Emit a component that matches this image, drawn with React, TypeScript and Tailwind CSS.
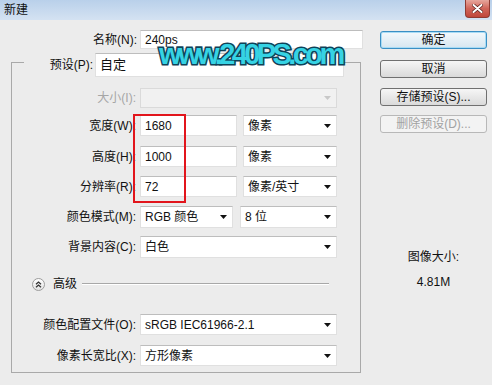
import { JSX, ReactNode } from "react";

const Arrow = ({ muted = false }: { muted?: boolean }) => (
  <svg width="7" height="4" viewBox="0 0 7 4" className="shrink-0">
    <path d="M0 0H7L3.5 4Z" fill={muted ? "#c8c8c8" : "#111"} />
  </svg>
);

function Box({
  value,
  className = "",
  select = false,
  disabled = false,
}: {
  value?: string;
  className?: string;
  select?: boolean;
  disabled?: boolean;
}) {
  return (
    <div
      className={`flex h-full items-center justify-between border pl-[4px] pr-[5px] ${
        disabled
          ? "border-[#dadada] bg-[#f1f1f1]"
          : "border-[#e0e0e0] border-t-[#bdbdbd] bg-white"
      } ${className}`}
    >
      <span className="whitespace-nowrap">{value}</span>
      {select && <Arrow muted={disabled} />}
    </div>
  );
}

function Row({
  label,
  muted = false,
  className = "",
  gap = "gap-[6px]",
  children,
}: {
  label: string;
  muted?: boolean;
  className?: string;
  gap?: string;
  children: ReactNode;
}) {
  return (
    <div className={`flex items-center ${className}`}>
      <span
        className={`w-[124px] whitespace-nowrap text-right ${
          muted ? "text-[#a6a6a6]" : ""
        }`}
      >
        {label}
      </span>
      <div className={`ml-[4px] flex h-full ${gap}`}>{children}</div>
    </div>
  );
}

function Btn({
  children,
  kind = "normal",
  className = "",
}: {
  children: ReactNode;
  kind?: "default" | "normal" | "disabled";
  className?: string;
}) {
  const look =
    kind === "default"
      ? "border-[#3a8fc4] bg-gradient-to-b from-[#f4f9fc] to-[#d6e6f0] shadow-[inset_0_0_0_1px_#a9dcf5]"
      : kind === "disabled"
      ? "border-[#b8b8b8] bg-[#f3f3f3] text-[#a2a2a2]"
      : "border-[#707070] bg-gradient-to-b from-[#f6f6f6] to-[#dadada]";
  return (
    <div
      className={`flex h-[18px] w-[107px] items-center justify-center rounded-[3px] border ${look} ${className}`}
    >
      {children}
    </div>
  );
}

export default function App(): JSX.Element {
  return (
    <div className="relative h-[385px] w-[492px] overflow-hidden bg-[#ececec] font-['Liberation_Sans','Noto_Sans_CJK_SC',sans-serif] text-[12px] leading-[14px] text-[#111]">
      {/* 타이틀 바 */}
      <div className="flex h-[20px] items-start justify-between bg-gradient-to-b from-[#b9d0ea] to-[#d4e2f2]">
        <span className="ml-[4px] mt-[3px]">新建</span>
        <div className="mr-[2px] flex h-[18px] w-[25px] items-center justify-center rounded-b-[4px] border border-t-0 border-[#8e3b33] bg-gradient-to-b from-[#e6a69d] via-[#d0655a] to-[#c0463a]">
          <svg width="11" height="9" viewBox="0 0 11 9">
            <path
              d="M1.5 1L9.5 8M9.5 1L1.5 8"
              stroke="#5a1d18"
              strokeWidth="3.4"
              strokeLinecap="round"
            />
            <path
              d="M1.5 1L9.5 8M9.5 1L1.5 8"
              stroke="#fff"
              strokeWidth="2"
              strokeLinecap="round"
            />
          </svg>
        </div>
      </div>

      <div className="flex">
        <div className="w-[380px] pl-[11px]">
          <div className="mt-[10px] flex h-[19px] items-center">
            <span className="w-[126px] text-right">名称(N):</span>
            <Box value="240ps" className="ml-[3px] w-[223px]" />
          </div>

          <fieldset className="mt-[4px] w-[350px] border border-[#a9a9a9] pb-[6px]">
            <legend className="ml-[12px] flex h-[18px] items-start">
              <span className="w-[69px] text-right leading-[24px]">预设(P):</span>
              <div className="ml-[2px] h-[24px] w-[249px]">
                <Box value="自定" className="text-[13px]" />
              </div>
            </legend>

            <Row label="大小(I):" muted className="mt-[17px] h-[20px]">
              <Box select disabled className="w-[197px]" />
            </Row>

            <div className="relative">
              <Row label="宽度(W):" className="mt-[7px] h-[21px]">
                <Box value="1680" className="w-[97px]" />
                <Box value="像素" select className="w-[94px]" />
              </Row>
              <Row label="高度(H):" className="mt-[10px] h-[21px]">
                <Box value="1000" className="w-[97px]" />
                <Box value="像素" select className="w-[94px]" />
              </Row>
              <Row label="分辨率(R):" className="mt-[9px] h-[21px]">
                <Box value="72" className="w-[97px]" />
                <Box value="像素/英寸" select className="w-[94px]" />
              </Row>
              <div className="absolute left-[121px] top-[-1px] h-[89px] w-[53px] border-2 border-[#e2151c]" />
            </div>

            <Row label="颜色模式(M):" className="mt-[9px] h-[22px]" gap="gap-[7px]">
              <Box value="RGB 颜色" select className="w-[93px]" />
              <Box value="8 位" select className="w-[97px]" />
            </Row>
            <Row label="背景内容(C):" className="mt-[8px] h-[22px]">
              <Box value="白色" select className="w-[197px]" />
            </Row>

            <div className="mt-[19px] flex h-[14px] items-center">
              <div className="ml-[20px] flex h-[13px] w-[13px] items-center justify-center rounded-full border border-[#9c9c9c] bg-gradient-to-b from-white to-[#e2e2e2]">
                <svg width="7" height="7" viewBox="0 0 7 7">
                  <path
                    d="M1 3.2L3.5 1L6 3.2M1 6.2L3.5 4L6 6.2"
                    fill="none"
                    stroke="#333"
                    strokeWidth="1.3"
                  />
                </svg>
              </div>
              <span className="ml-[8px]">高级</span>
              <div className="ml-[5px] mr-[31px] h-[2px] flex-1 border-t border-[#a8a8a8] bg-white" />
            </div>

            <Row label="颜色配置文件(O):" className="mt-[23px] h-[21px]">
              <Box value="sRGB IEC61966-2.1" select className="w-[197px]" />
            </Row>
            <Row label="像素长宽比(X):" className="mt-[10px] h-[21px]">
              <Box value="方形像素" select className="w-[197px]" />
            </Row>
          </fieldset>
        </div>

        <div className="flex w-[107px] flex-col items-center">
          <Btn kind="default" className="mt-[11px]">
            确定
          </Btn>
          <Btn className="mt-[11px]">取消</Btn>
          <Btn className="mt-[10px]">存储预设(S)...</Btn>
          <Btn kind="disabled" className="mt-[9px]">
            删除预设(D)...
          </Btn>
          <span className="mt-[117px]">图像大小:</span>
          <span className="mt-[11px]">4.81M</span>
        </div>
      </div>

      {/* 워터마크 */}
      <div className="absolute left-[159px] top-[40px] text-[29px] font-bold leading-none tracking-[-3.6px] text-[#36d3e4] [-webkit-text-stroke:3px_#0f4257] [paint-order:stroke_fill]">
        www.240PS.com
      </div>
    </div>
  );
}
